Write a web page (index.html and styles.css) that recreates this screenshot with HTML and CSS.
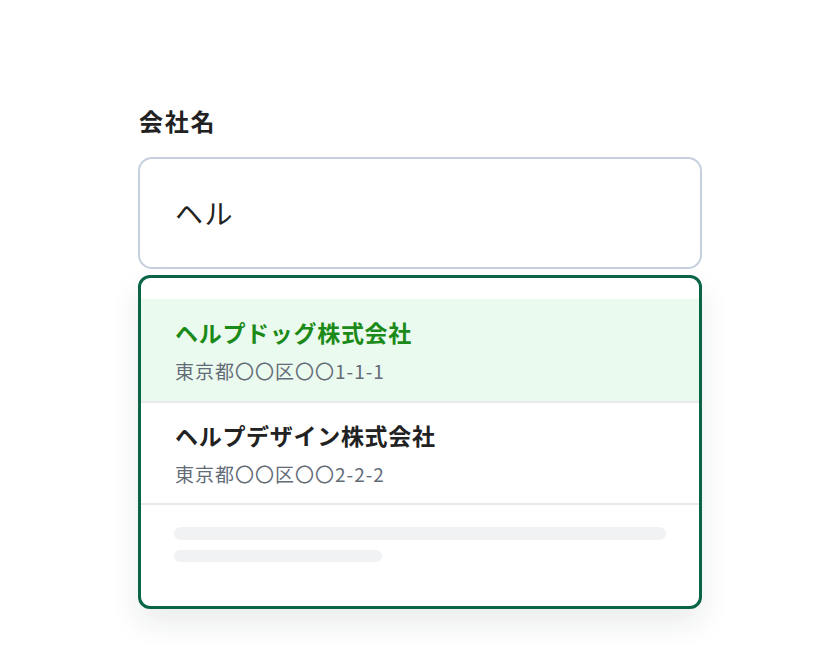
FILE: index.html
```html
<!DOCTYPE html>
<html lang="ja">
<head>
<meta charset="utf-8">
<title>会社名</title>
<link rel="stylesheet" href="styles.css">
</head>
<body>
<div class="field">
  <label class="label">会社名</label>
  <div class="input">ヘル</div>
  <div class="dropdown">
    <ul class="list">
      <li class="item active">
        <div class="name">ヘルプドッグ株式会社</div>
        <div class="addr">東京都〇〇区〇〇1-1-1</div>
      </li>
      <li class="item">
        <div class="name">ヘルプデザイン株式会社</div>
        <div class="addr">東京都〇〇区〇〇2-2-2</div>
      </li>
      <li class="skeleton">
        <div class="bar long"></div>
        <div class="bar short"></div>
      </li>
    </ul>
  </div>
</div>
</body>
</html>
```

FILE: styles.css
```css
* { box-sizing: border-box; }
html, body {
  margin: 0;
  padding: 0;
  background: #ffffff;
}
body {
  min-height: 660px;
  font-family: "Noto Sans CJK JP", "Noto Sans", sans-serif;
  color: #222222;
}
.field {
  width: 564px;
  margin-left: 138px;
  padding-top: 103px;
  display: flex;
  flex-direction: column;
}
.label {
  font-size: 24px;
  line-height: 36px;
  font-weight: 700;
  letter-spacing: 1.8px;
  color: #222222;
  margin-left: 1px;
}
.input {
  margin-top: 18px;
  height: 112px;
  border: 2px solid #c6d0df;
  border-radius: 14px;
  padding-left: 35px;
  display: flex;
  align-items: center;
  font-size: 28px;
  color: #222222;
  letter-spacing: 1.5px;
}
.dropdown {
  margin-top: 6px;
  border: 3px solid #0a6446;
  border-radius: 12px;
  background: #ffffff;
  box-shadow: 0 14px 30px rgba(20, 30, 40, 0.09);
  overflow: hidden;
}
.list {
  list-style: none;
  margin: 0;
  padding: 21px 0 0;
}
.item {
  height: 104px;
  padding: 17px 0 0 34px;
  border-bottom: 2px solid #e7e9ec;
  display: flex;
  flex-direction: column;
  gap: 8px;
}
.item.active {
  background: #ebfaee;
}
.item + .item {
  height: 102px;
  padding-top: 16px;
}
.name {
  font-size: 23px;
  line-height: 33px;
  font-weight: 700;
  letter-spacing: 0.7px;
  color: #222222;
}
.item.active .name {
  color: #1b8a18;
}
.addr {
  font-size: 19px;
  line-height: 27px;
  letter-spacing: 1px;
  color: #636b77;
}
.skeleton {
  padding: 22px 33px 44px 33px;
  display: flex;
  flex-direction: column;
  gap: 10px;
}
.bar {
  height: 13px;
  border-radius: 7px;
  background: #f1f2f4;
}
.bar.short {
  width: 208px;
  height: 12px;
}
```
